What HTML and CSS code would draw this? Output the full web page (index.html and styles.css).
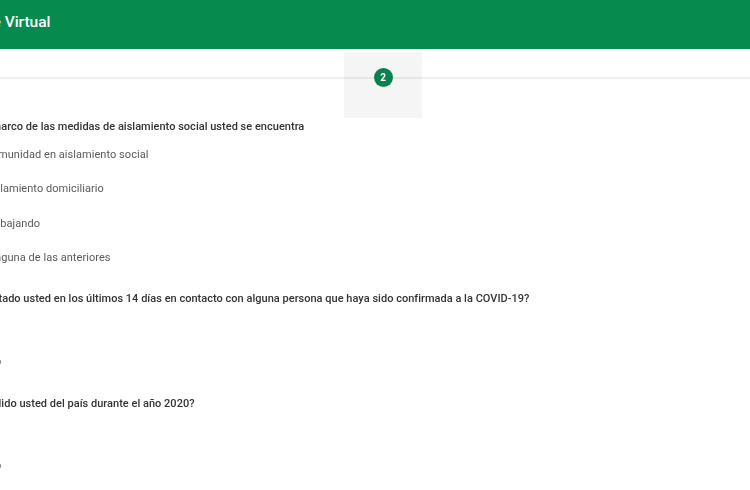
FILE: index.html
```html
<!DOCTYPE html>
<html lang="es">
<head>
<meta charset="utf-8">
<title>Triage Virtual</title>
<link rel="stylesheet" href="styles.css">
</head>
<body>
<div class="page">
  <header class="topbar"><h1 class="brand">Triage Virtual</h1></header>
  <div class="stepper">
    <div class="step"><span class="step-dot">2</span></div>
  </div>
  <form class="form">
    <section class="group">
      <p class="question">En el marco de las medidas de aislamiento social usted se encuentra</p>
      <div class="option option-first">Comunidad en aislamiento social</div>
      <div class="option">Aislamiento domiciliario</div>
      <div class="option">Trabajando</div>
      <div class="option">Ninguna de las anteriores</div>
    </section>
    <section class="group">
      <p class="question">¿Ha estado usted en los últimos 14 días en contacto con alguna persona que haya sido confirmada a la COVID-19?</p>
      <div class="option option-first option-short">Si</div>
      <div class="option option-short">No</div>
    </section>
    <section class="group group-last">
      <p class="question">¿Ha salido usted del país durante el año 2020?</p>
      <div class="option option-first option-short">Si</div>
      <div class="option option-short">No</div>
    </section>
  </form>
</div>
</body>
</html>
```
FILE: styles.css
```css
html, body {
  margin: 0;
  padding: 0;
  background: #fff;
}
.page {
  width: 750px;
  height: 490px;
  overflow: hidden;
  font-family: Roboto, "Liberation Sans", sans-serif;
  filter: blur(0.55px);
}
.topbar {
  height: 49px;
  background: #068a4e;
  display: flex;
  align-items: center;
  overflow: hidden;
  padding-bottom: 5px;
  box-sizing: border-box;
}
.brand {
  margin: 0 0 0 -43px;
  font-size: 15.5px;
  font-weight: 500;
  color: #fff;
  white-space: nowrap;
}
.stepper {
  margin-top: 3px;
  padding-left: 344px;
  height: 66px;
  background: linear-gradient(#f0f0f0, #f0f0f0) 0 25px / 100% 2px no-repeat;
}
.step {
  width: 78px;
  height: 66px;
  background: rgba(0, 0, 0, 0.04);
  display: flex;
  justify-content: center;
  padding-top: 16px;
  box-sizing: border-box;
}
.step-dot {
  width: 19px;
  height: 19px;
  border-radius: 50%;
  background: #0a7f4f;
  color: #fff;
  font-size: 10px;
  font-weight: 700;
  display: flex;
  align-items: center;
  justify-content: center;
}
.form {
  margin: 0 0 0 -35px;
  padding-top: 3px;
  width: 800px;
}
.question {
  margin: 0;
  height: 12px;
  line-height: 12px;
  font-size: 11px;
  font-weight: 500;
  letter-spacing: 0.02px;
  color: #333;
  white-space: nowrap;
}
.group + .group { margin-top: 29px; }
.group-last.group-last { margin-top: 30px; }
.option {
  height: 12px;
  line-height: 12px;
  margin-top: 22.45px;
  padding-left: 19.5px;
  font-size: 11px;
  letter-spacing: 0.05px;
  color: #5a5a5a;
  white-space: nowrap;
}
.option-first {
  margin-top: 16px;
}
.option-short {
  padding-left: 22px;
}
```
